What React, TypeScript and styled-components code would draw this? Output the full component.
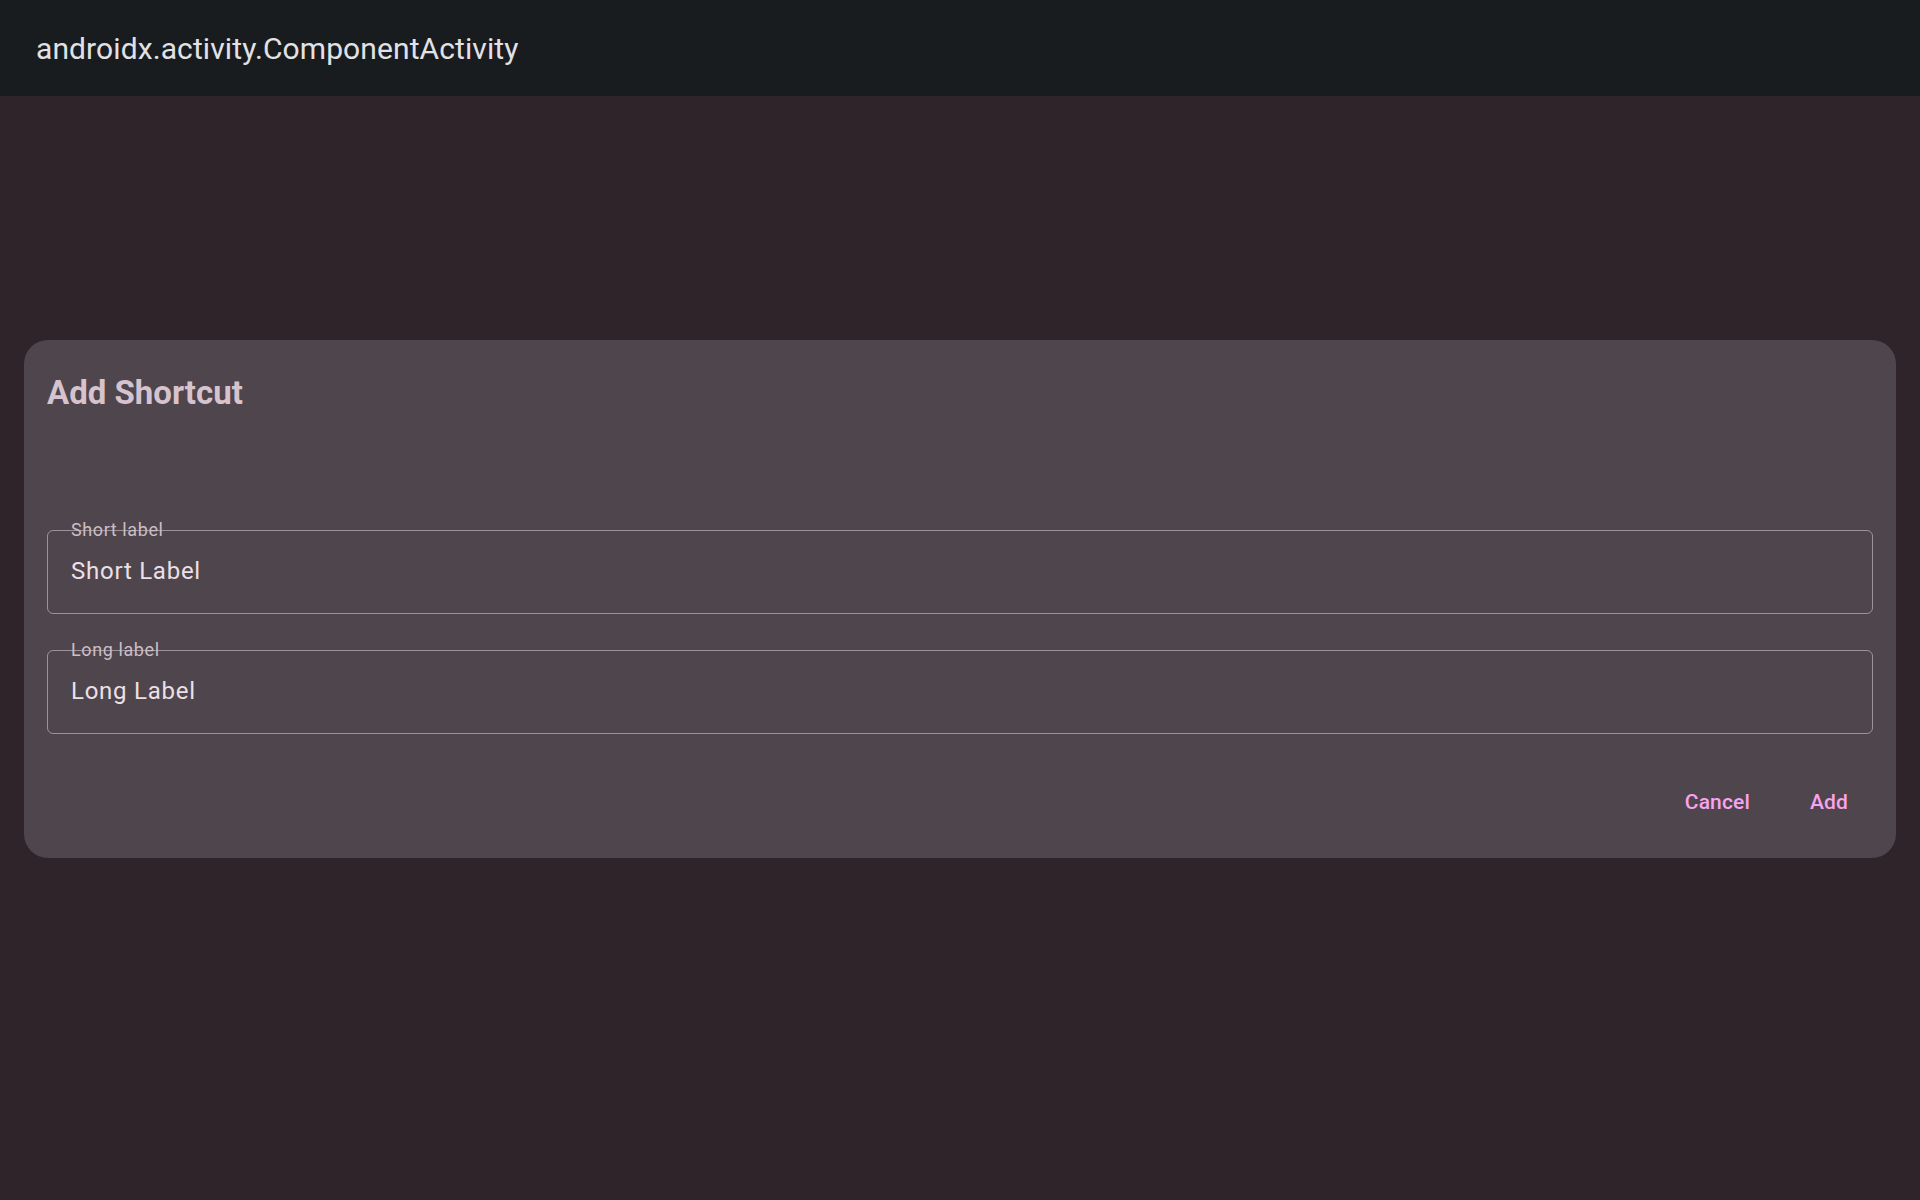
import React from "react";
import styled, { createGlobalStyle } from "styled-components";

const GlobalStyle = createGlobalStyle`
  html, body {
    margin: 0;
    padding: 0;
    background: #2f2429;
    font-family: Roboto, "Noto Sans", "Liberation Sans", sans-serif;
  }
`;

const Screen = styled.div`
  width: 1920px;
  height: 1200px;
  background: #2f2429;
  display: flex;
  flex-direction: column;
`;

const TitleBar = styled.header`
  height: 96px;
  flex-shrink: 0;
  background: #191c1f;
  display: flex;
  align-items: center;
  padding: 0 36px;
  box-sizing: border-box;
`;

const WindowTitle = styled.h1`
  margin: 0;
  font-size: 30px;
  font-weight: 400;
  line-height: 34px;
  letter-spacing: 0.1px;
  color: #e2e2e6;
  padding-top: 1px;
`;

const Dialog = styled.section`
  margin: 244px 24px 0;
  background: #4f454c;
  border-radius: 24px;
  padding: 33px 23px 26px;
  display: flex;
  flex-direction: column;
`;

const DialogTitle = styled.h2`
  margin: 0;
  font-size: 33px;
  line-height: 40px;
  font-weight: 700;
  color: #d6c3cd;
`;

const Fields = styled.div`
  margin-top: 117px;
  display: flex;
  flex-direction: column;
  gap: 36px;
`;

const Field = styled.label`
  position: relative;
  display: block;
  height: 84px;
  box-sizing: border-box;
  border: 1px solid #9e929a;
  border-radius: 6px;
  padding: 28px 23px 0;
`;

const FloatingLabel = styled.span`
  position: absolute;
  top: -10px;
  left: 23px;
  font-size: 18px;
  line-height: 18px;
  letter-spacing: 0.6px;
  color: #cbbec6;
`;

const Value = styled.div`
  font-size: 24px;
  line-height: 24px;
  letter-spacing: 0.75px;
  color: #ece0e6;
`;

const Actions = styled.div`
  margin-top: 38px;
  display: flex;
  justify-content: flex-end;
  gap: 24px;
  padding-right: 7px;
`;

const TextButton = styled.button`
  height: 60px;
  padding: 0 18px;
  border: none;
  background: transparent;
  font-family: inherit;
  font-size: 21px;
  font-weight: 500;
  letter-spacing: 0.15px;
  line-height: 60px;
  color: #f7a3ef;
  border-radius: 30px;
  cursor: pointer;
`;

export default function App() {
  return (
    <>
      <GlobalStyle />
      <Screen>
        <TitleBar>
          <WindowTitle>androidx.activity.ComponentActivity</WindowTitle>
        </TitleBar>
        <Dialog>
          <DialogTitle>Add Shortcut</DialogTitle>
          <Fields>
            <Field>
              <FloatingLabel>Short label</FloatingLabel>
              <Value>Short Label</Value>
            </Field>
            <Field>
              <FloatingLabel>Long label</FloatingLabel>
              <Value>Long Label</Value>
            </Field>
          </Fields>
          <Actions>
            <TextButton>Cancel</TextButton>
            <TextButton>Add</TextButton>
          </Actions>
        </Dialog>
      </Screen>
    </>
  );
}
